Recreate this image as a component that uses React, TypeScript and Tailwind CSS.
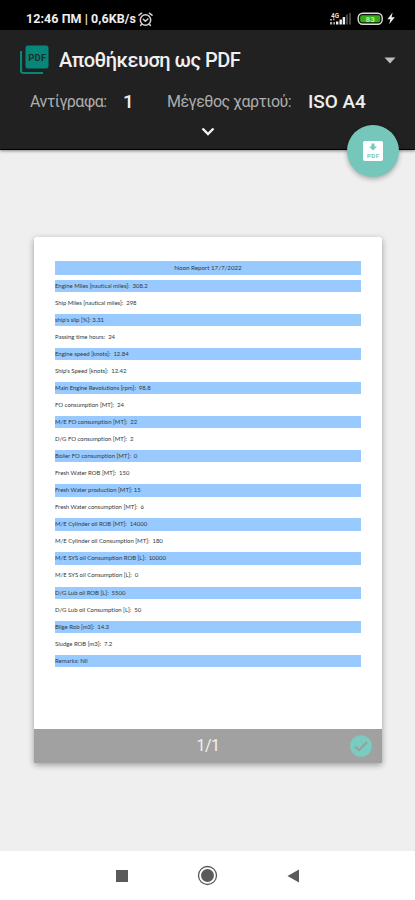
import React from "react";

const rows: string[] = [
  "Engine Miles [nautical miles]:  308.2",
  "Ship Miles [nautical miles]:  298",
  "ship's slip [%]: 3.31",
  "Passing time hours:  24",
  "Engine speed [knots]:  12.84",
  "Ship's Speed [knots]:  12.42",
  "Main Engine Revolutions [rpm]:  98.8",
  "FO consumption [MT]:  24",
  "M/E FO consumption [MT]:  22",
  "D/G FO consumption [MT]:  2",
  "Boiler FO consumption [MT]:  0",
  "Fresh Water ROB [MT]:  150",
  "Fresh Water production [MT]: 15",
  "Fresh Water consumption [MT]:  6",
  "M/E Cylinder oil ROB [MT]:  14000",
  "M/E Cylinder oil Consumption [MT]:  180",
  "M/E SYS oil Consumption ROB [L]:  10000",
  "M/E SYS oil Consumption [L]:  0",
  "D/G Lub oil ROB [L]:  5500",
  "D/G Lub oil Consumption [L]:  50",
  "Bilge Rob [m3]:  14.3",
  "Sludge ROB [m3]:  7.2",
  "Remarks: Nil",
];

function StatusBar() {
  return (
    <div className="flex h-[30px] shrink-0 items-start bg-black pl-[26px] pr-[20px] pt-[11px] text-[#eeeeee]">
      <span className="w-[110px] whitespace-pre text-[12.5px] font-bold leading-[16px] tracking-[0.06px]">12:46 ΠΜ | 0,6KB/s</span>
      <svg className="ml-[2px] mt-px" width="15" height="15" viewBox="0 0 15 15" fill="none" stroke="#d4d4d4" strokeWidth="1.5" strokeLinecap="round">
        <circle cx="7.5" cy="8" r="5.2" />
        <path d="M1 3.2 3.6 1.2M14 3.2 11.4 1.2M5.3 7.3l2 1.9 2.6-2.2M3.6 12.2l-1 1.2M11.4 12.2l1 1.2" />
      </svg>
      <div className="ml-auto flex items-center">
        <svg width="23" height="15" viewBox="0 0 23 15">
          <text x="2" y="6.500" fontSize="6.5" fontWeight="700" fill="#dddddd">4G</text>
          <path d="M1 8h2v1.4H1zM4 7.6h1.6v1.6H4zM1 11h2.2v2.5H1zM4.4 11h1.6v2.5H4.4z" fill="#aaaaaa" />
          <path d="M7 10.5h2.4v3H7zM10.5 8.5h2.4v5h-2.4zM13.7 6h2.4v7.5h-2.4z" fill="#eeeeee" />
          <path d="M17 3.5h2v10h-2zM20 2h2v11.5h-2z" fill="#444444" />
        </svg>
        <svg className="ml-[5px]" width="27" height="14" viewBox="0 0 27 14">
          <rect x="1.2" y="1.2" width="24" height="11" rx="4.5" fill="#111" stroke="#dddddd" strokeWidth="1.4" />
          <rect x="3.2" y="3.2" width="20" height="7" rx="2" fill="#35ac17" />
          <text x="13.2" y="9.7" fontSize="8" fontWeight="700" textAnchor="middle" fill="#b4f49b">83</text>
        </svg>
        <svg className="ml-[3px]" width="8" height="13" viewBox="0 0 8 13">
          <path d="M5.6 0.5 0.4 7.2H3.4L2.2 12.3 7.8 5.2H4.6z" fill="#eeeeee" />
        </svg>
      </div>
    </div>
  );
}

function Header() {
  return (
    <header className="relative z-10 flex h-[120px] shrink-0 flex-col border-b border-black bg-[#212121] shadow-[0_1px_3px_rgba(0,0,0,0.45)]">
      <div className="flex h-[60px] items-center pl-[20px] pr-[19px]">
        <svg width="29" height="30" viewBox="0 0 29 30">
          <path d="M1 6v20.5A2.5 2.5 0 0 0 3.500 28H23" fill="none" stroke="#07877a" strokeWidth="2.2" />
          <rect x="5.500" y="0.500" width="23" height="23" rx="2.500" fill="#07877a" />
          <text x="17.200" y="15.500" fontSize="9.500" fontWeight="700" textAnchor="middle" textLength="18" fill="#17302d">PDF</text>
        </svg>
        <h1 className="ml-[10px] text-[20px] font-medium leading-[24px] tracking-[-0.5px] text-[#f0f0f0]">Αποθήκευση ως PDF</h1>
        <svg className="ml-auto" width="12" height="7" viewBox="0 0 12 7">
          <path d="M0.500 0.500h11L6 6.500z" fill="#bdbdbd" />
        </svg>
      </div>
      <div className="flex h-[24px] items-center pl-[30px]">
        <span className="w-[93px] text-[16px] tracking-[-0.5px] text-[#adadad]">Αντίγραφα:</span>
        <span className="w-[44px] text-[19px] font-medium text-[#eeeeee]">1</span>
        <span className="w-[141px] whitespace-nowrap text-[16px] tracking-[-0.5px] text-[#adadad]">Μέγεθος χαρτιού:</span>
        <span className="text-[19px] font-medium tracking-[-0.05px] text-[#eeeeee]">ISO A4</span>
      </div>
      <svg className="ml-[201px] mt-[13px]" width="14" height="10" viewBox="0 0 14 10">
        <path d="M1.500 1.500 7 7 12.500 1.500" fill="none" stroke="#f2f2f2" strokeWidth="2.400" />
      </svg>
      <button aria-label="PDF" className="absolute left-[347px] top-[95px] flex h-[52px] w-[52px] items-center justify-center rounded-full bg-[#76c7bb] shadow-[0_2px_5px_rgba(0,0,0,0.3)]">
        <svg width="20" height="20" viewBox="0 0 20 20">
          <rect width="20" height="20" rx="2" fill="#ffffff" />
          <path d="M8.500 2.500h3v3h2.500L10 9.500 6 5.500h2.500z" fill="#76c7bb" />
          <text x="10" y="17" fontSize="6" fontWeight="700" textAnchor="middle" textLength="12" fill="#76c7bb">PDF</text>
        </svg>
      </button>
    </header>
  );
}

function Report() {
  return (
    <section className="ml-[34px] mt-[87px] flex h-[526px] w-[348px] flex-col overflow-hidden rounded-t-[3px] bg-white shadow-[0_2px_6px_rgba(0,0,0,0.35)]">
      <div className="flex flex-1 flex-col pl-[21px] pr-[21px] pt-[24px] font-['Lato',sans-serif] text-[6px] tracking-[-0.03px] text-[#2f3b42]">
        <div className="mb-[5.200px] h-[13.500px] bg-[#99caff] text-center text-[6.250px] leading-[14px]">Noon Report 17/7/2022</div>
        {rows.map((row, i) => (
          <div key={row} className={i % 2 === 0 ? "mb-[4.750px] h-[12.300px] whitespace-pre bg-[#99caff] leading-[12.500px]" : "mb-[4.750px] h-[12.300px] whitespace-pre leading-[12.500px]"}>
            {row}
          </div>
        ))}
      </div>
      <footer className="relative flex h-[34px] shrink-0 items-center justify-center bg-[#a1a1a1] text-[16px] tracking-[-0.6px] text-[#f2f2f2]">
        1/1
        <svg className="absolute right-[10px] top-[6px]" width="22" height="22" viewBox="0 0 22 22">
          <circle cx="11" cy="11" r="10.800" fill="#7accc0" />
          <path d="M5 11.500 9 15.300 17 7" fill="none" stroke="#999f9e" strokeWidth="2" />
        </svg>
      </footer>
    </section>
  );
}

export default function App() {
  return (
    <main className="flex h-[900px] w-[415px] flex-col overflow-hidden bg-[#efefef] font-['Roboto','Noto_Sans',sans-serif]">
      <StatusBar />
      <Header />
      <Report />
      <nav className="mt-auto flex h-[49px] shrink-0 items-center bg-white pl-[116px]">
        <span className="h-[12px] w-[12px] bg-[#5a5a5a]" />
        <svg className="ml-[69px]" width="21" height="21" viewBox="0 0 21 21">
          <circle cx="10.500" cy="10.500" r="9" fill="none" stroke="#5a5a5a" strokeWidth="1.300" />
          <circle cx="10.500" cy="10.500" r="6.500" fill="#5a5a5a" />
        </svg>
        <svg className="ml-[69px]" width="13" height="14" viewBox="0 0 13 14">
          <path d="M12 0.500v13L0.500 7z" fill="#5a5a5a" />
        </svg>
      </nav>
    </main>
  );
}
